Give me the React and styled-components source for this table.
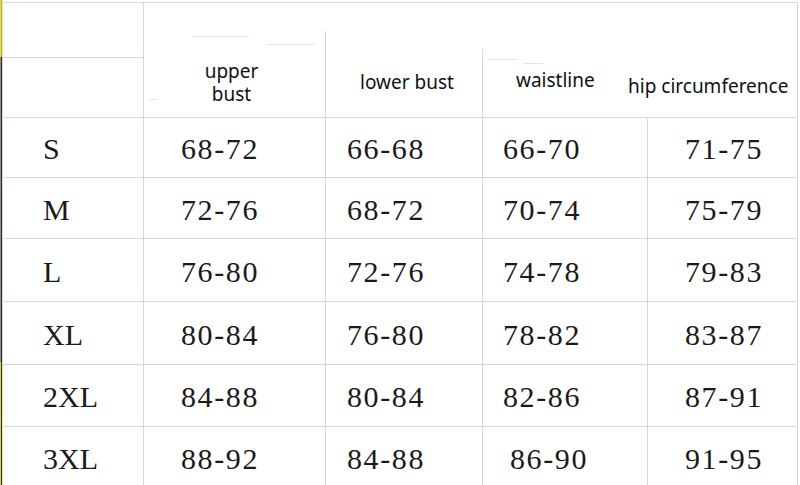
import React from "react";
import styled, { createGlobalStyle } from "styled-components";

const Global = createGlobalStyle`
  html, body { margin: 0; padding: 0; background: #ffffff; }
  * { box-sizing: border-box; }
`;

const LINE = "#d6d6e3";

const Page = styled.div`
  display: flex;
  width: 800px;
  height: 485px;
  overflow: hidden;
  background: #ffffff;
`;

const Strip = styled.div`
  display: flex;
  flex-direction: column;
  width: 3px;
  flex: none;
`;

const StripPart = styled.div`
  height: ${(p) => p.$h}px;
  flex: ${(p) => (p.$grow ? 1 : "none")};
  background: ${(p) =>
    p.$tone === "yellow"
      ? "linear-gradient(to right, #e2da5c 0 1px, #b8ae3a 1px 2px, #ece69a 2px 3px)"
      : p.$tone === "mixed"
      ? "linear-gradient(to right, #d6cf64 0 1px, #34342e 1px 2px, #ebe6a4 2px 3px)"
      : "linear-gradient(to right, #8c8c80 0 1px, #2e2e2e 1px 2px, #d8d8d0 2px 3px)"};
`;

const Grid = styled.div`
  display: grid;
  grid-template-columns: 141px 182px 157px 165px 150px;
  grid-template-rows: 115px 60px 61px 63px 63px 62px 62px;
  margin-top: 2px;
  border-top: 1px solid ${LINE};
  align-content: start;
`;

const Cell = styled.div`
  position: relative;
  display: flex;
  align-items: ${(p) => (p.$head ? "flex-start" : "center")};
  justify-content: ${(p) => (p.$center ? "center" : "flex-start")};
  padding-left: ${(p) => p.$pad || 0}px;
  padding-top: ${(p) => p.$top || 0}px;
  border-right: 1px solid transparent;
  border-bottom: 1px solid ${LINE};
  background: ${(p) =>
    p.$rule === 0
      ? "none"
      : `linear-gradient(${LINE}, ${LINE}) right bottom / 1px ${
          p.$rule ? `${p.$rule}px` : "100%"
        } no-repeat`};
  background-origin: border-box;
  overflow: visible;
  white-space: nowrap;
`;

const SplitCell = styled.div`
  display: grid;
  grid-template-rows: 55px 1fr;
  border-right: 1px solid ${LINE};
`;

const SubCell = styled.div`
  border-bottom: 1px solid ${LINE};
`;

const HeadText = styled.span`
  font-family: "Noto Sans", "Open Sans", sans-serif;
  font-size: 19px;
  line-height: 23px;
  color: #111111;
  text-align: center;
  white-space: ${(p) => (p.$wrap ? "normal" : "nowrap")};
  width: ${(p) => (p.$w ? `${p.$w}px` : "auto")};
  margin-left: ${(p) => p.$dx || 0}px;
  position: relative;
  z-index: 1;
`;

const Value = styled.span`
  font-family: "Liberation Serif", "Times New Roman", serif;
  font-size: 30px;
  letter-spacing: ${(p) => (p.$tight ? 0 : 1.6)}px;
  color: #1a1a1a;
  margin-left: ${(p) => p.$dx || 0}px;
`;

const Smudge = styled.span`
  position: absolute;
  left: ${(p) => p.$x}px;
  top: ${(p) => p.$y}px;
  width: ${(p) => p.$w}px;
  height: 1px;
  background: #dcdcdc;
  opacity: 0.8;
`;

const sizes = ["S", "M", "L", "XL", "2XL", "3XL"];
const data = [
  ["68-72", "66-68", "66-70", "71-75"],
  ["72-76", "68-72", "70-74", "75-79"],
  ["76-80", "72-76", "74-78", "79-83"],
  ["80-84", "76-80", "78-82", "83-87"],
  ["84-88", "80-84", "82-86", "87-91"],
  ["88-92", "84-88", "86-90", "91-95"],
];
const pads = [37, 21, 20, 37];

export default function App() {
  return (
    <>
      <Global />
      <Page>
        <Strip>
          <StripPart $tone="yellow" $h={57} />
          <StripPart $tone="dark" $h={305} />
          <StripPart $tone="mixed" $grow />
        </Strip>
        <Grid>
          <SplitCell>
            <SubCell />
            <SubCell />
          </SplitCell>
          <Cell $head $center $top={57} $rule={87}>
            <Smudge $x={49} $y={33} $w={56} />
            <Smudge $x={124} $y={41} $w={46} />
            <Smudge $x={6} $y={96} $w={6} />
            <HeadText $wrap $w={80} $dx={-6}>
              upper bust
            </HeadText>
          </Cell>
          <Cell $head $pad={34} $top={68} $rule={69}>
            <HeadText>lower bust</HeadText>
          </Cell>
          <Cell $head $pad={33} $top={66} $rule={0}>
            <Smudge $x={4} $y={56} $w={30} />
            <Smudge $x={40} $y={60} $w={20} />
            <HeadText>waistline</HeadText>
          </Cell>
          <Cell $head $top={72}>
            <HeadText $dx={-20}>hip circumference</HeadText>
          </Cell>
          {sizes.map((s, i) => (
            <React.Fragment key={s}>
              <Cell $pad={40} $top={3}>
                <Value $tight>{s}</Value>
              </Cell>
              {data[i].map((v, j) => (
                <Cell key={j} $pad={pads[j]} $top={3}>
                  <Value $dx={i === 5 && j === 2 ? 7 : 0}>{v}</Value>
                </Cell>
              ))}
            </React.Fragment>
          ))}
        </Grid>
      </Page>
    </>
  );
}
